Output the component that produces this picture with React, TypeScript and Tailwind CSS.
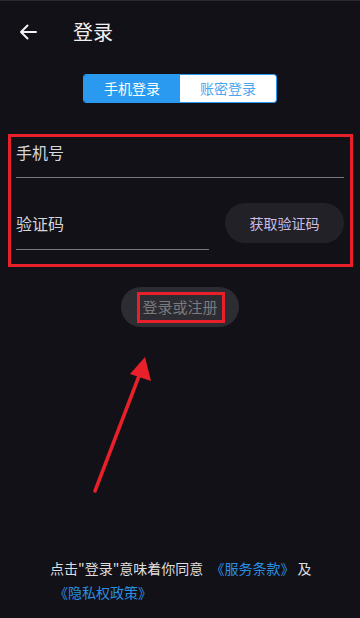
import { useState } from "react";

const FONT = { fontFamily: '"Noto Sans CJK SC", "Noto Sans", sans-serif' };

function BackArrow() {
  return (
    <svg width="18" height="16" viewBox="0 0 18 16" fill="none">
      <path d="M17 8H2M8.5 1.5 2 8l6.5 6.5" stroke="#f2f2f2" strokeWidth="2" strokeLinecap="round" strokeLinejoin="round" />
    </svg>
  );
}

export default function App() {
  const [mode, setMode] = useState<"sms" | "pwd">("sms");

  return (
    <div className="relative flex h-[618px] w-[360px] flex-col overflow-hidden border-t border-[#2a2930] bg-[#131118]" style={FONT}>
      {/* Header */}
      <div className="flex h-[62px] items-center">
        <button className="ml-[19px] flex h-8 w-6 items-center">
          <BackArrow />
        </button>
        <h1 className="ml-[30px] text-[20px] leading-none text-[#f0f0f0]">登录</h1>
      </div>

      {/* Tabs */}
      <div className="mt-[11px] flex justify-center">
        <div className="flex h-[29px] w-[194px] overflow-hidden rounded-[3px] border border-[#2a9af0]">
          <button
            onClick={() => setMode("sms")}
            className={`flex-1 text-[14px] ${mode === "sms" ? "bg-[#2a9af0] text-white" : "bg-white text-[#2a9af0]"}`}
          >
            手机登录
          </button>
          <button
            onClick={() => setMode("pwd")}
            className={`flex-1 text-[14px] ${mode === "pwd" ? "bg-[#2a9af0] text-white" : "bg-white text-[#4aa6ef]"}`}
          >
            账密登录
          </button>
        </div>
      </div>

      {/* Form */}
      <div className="mt-[31px] px-4">
        <div className="flex h-[44px] items-end border-b border-[#77767c] pb-[17px]">
          <span className="text-[16px] leading-none text-[#d6d6d8]">手机号</span>
        </div>
        <div className="mt-[25px] flex items-center justify-between">
          <div className="flex h-[47px] w-[193px] items-end border-b border-[#77767c] pb-[18px]">
            <span className="text-[16px] leading-none text-[#d6d6d8]">验证码</span>
          </div>
          <button className="-mt-[7px] h-[40px] w-[119px] rounded-full bg-[#222127] text-[14px] text-[#c9bde6]">
            获取验证码
          </button>
        </div>
      </div>

      {/* Submit */}
      <div className="mt-[37px] flex justify-center">
        <button className="h-[40px] w-[118px] rounded-full bg-[#2d2c32] text-[15px] text-[#7a797e]">
          登录或注册
        </button>
      </div>

      {/* Agreement */}
      <div className="mt-auto mb-[14px] whitespace-nowrap pl-[50px] text-[14px] leading-[24px] text-[#dedede]">
        <p>
          点击"登录"意味着你同意 <span className="ml-[4px] text-[#2a8fe0]">《服务条款》</span> 及
        </p>
        <p className="ml-[4px] text-[#2a8fe0]">《隐私权政策》</p>
      </div>

      {/* Red annotations (overlay) */}
      <div className="pointer-events-none absolute left-[8px] top-[133px] h-[133px] w-[345px] border-[3px] border-[#e8202a]" />
      <div className="pointer-events-none absolute left-[137px] top-[291px] h-[31px] w-[88px] border-[3px] border-[#e8202a]" />
      <svg className="pointer-events-none absolute left-0 top-0" width="360" height="618">
        <line x1="95" y1="490" x2="139" y2="375" stroke="#e8202a" strokeWidth="3.5" strokeLinecap="round" />
        <polygon points="145,356 151,380 130,373" fill="#e8202a" />
      </svg>
    </div>
  );
}
